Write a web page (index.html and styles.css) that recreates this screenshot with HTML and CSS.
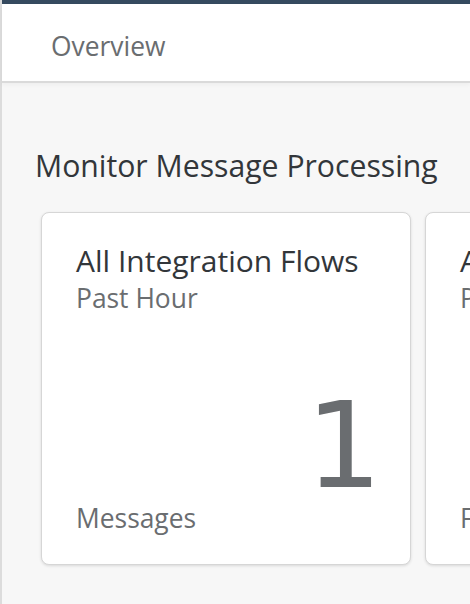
FILE: index.html
```html
<!DOCTYPE html>
<html lang="en">
<head>
<meta charset="utf-8">
<title>Overview</title>
<link rel="stylesheet" href="styles.css">
</head>
<body>
<div class="shell">
  <div class="topbar"></div>
  <header class="header">
    <span class="header-title">Overview</span>
  </header>
  <main class="content">
    <h1 class="section-title">Monitor Message Processing</h1>
    <div class="tiles">
      <div class="tile">
        <div class="tile-head">
          <div class="tile-title">All Integration Flows</div>
          <div class="tile-sub">Past Hour</div>
        </div>
        <div class="tile-value">1</div>
        <div class="tile-foot">Messages</div>
      </div>
      <div class="tile">
        <div class="tile-head">
          <div class="tile-title">All Integration Flows</div>
          <div class="tile-sub">Past Hour</div>
        </div>
        <div class="tile-value">0</div>
        <div class="tile-foot">Failed Messages</div>
      </div>
    </div>
  </main>
</div>
</body>
</html>
```
FILE: styles.css
```css
html, body {
  margin: 0;
  padding: 0;
  height: 100%;
  overflow: hidden;
  background: #f7f7f7;
  font-family: "Open Sans", "Noto Sans", sans-serif;
}

.shell {
  border-left: 2px solid #dcdcdc;
  height: 100%;
  box-sizing: border-box;
  display: flex;
  flex-direction: column;
}

.topbar {
  height: 4px;
  flex: 0 0 auto;
  background: #354a5f;
}

.header {
  flex: 0 0 auto;
  height: 79px;
  background: #ffffff;
  border-bottom: 2px solid #dadada;
  box-shadow: 0 2px 4px rgba(0, 0, 0, 0.04);
  display: flex;
  align-items: center;
  padding-left: 49px;
  box-sizing: border-box;
}

.header-title {
  font-size: 26.4px;
  color: #6a6d70;
  line-height: 1;
  padding-top: 8px;
}

.content {
  padding: 0 0 0 33px;
}

.section-title {
  margin: 63px 0 0 0;
  font-size: 30.2px;
  font-weight: 400;
  color: #32363a;
  line-height: 40px;
  white-space: nowrap;
}

.tiles {
  display: flex;
  gap: 14px;
  margin-top: 26px;
  padding-left: 6px;
}

.tile {
  flex: 0 0 auto;
  width: 368px;
  height: 351px;
  background: #ffffff;
  border: 1px solid #d6d6d6;
  border-radius: 8px;
  box-shadow: 0 1px 3px rgba(0, 0, 0, 0.12);
  display: flex;
  flex-direction: column;
}

.tile-head {
  padding: 30px 34px 0 34px;
}

.tile-title {
  font-size: 30px;
  color: #32363a;
  line-height: 36px;
  white-space: nowrap;
}

.tile-sub {
  font-size: 26.4px;
  color: #6a6d70;
  line-height: 38px;
  white-space: nowrap;
}

.tile-value {
  flex: 1 1 auto;
  text-align: right;
  font-family: "DejaVu Sans", sans-serif;
  font-size: 120px;
  color: #6a6d70;
  line-height: 100px;
  padding: 79px 28px 0 0;
}

.tile-foot {
  font-size: 26.4px;
  color: #6a6d70;
  line-height: 32px;
  padding: 0 34px 30px 34px;
  white-space: nowrap;
}
```
